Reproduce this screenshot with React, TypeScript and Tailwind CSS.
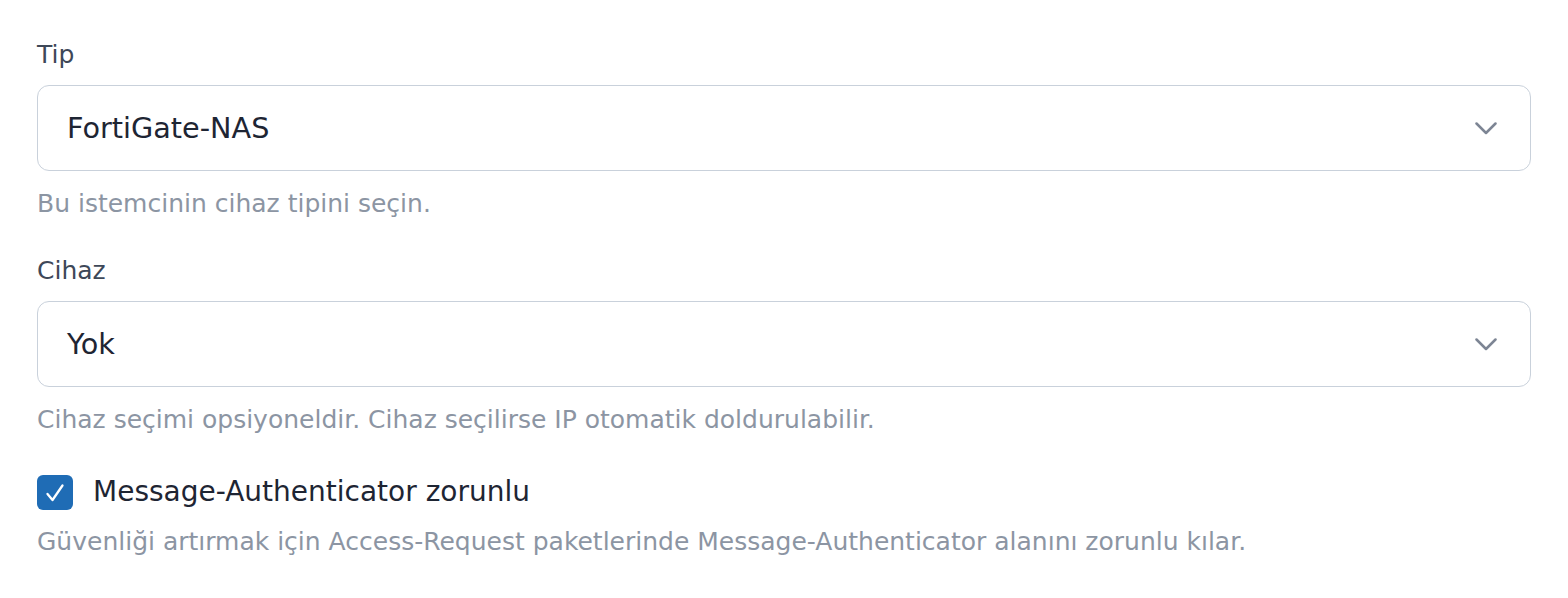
import React from "react";

function Chevron() {
  return (
    <svg width="22" height="13" viewBox="0 0 22 13" fill="none" className="shrink-0">
      <polyline points="1.5,1.5 11,11 20.5,1.5" stroke="#7d8594" strokeWidth="2.5" strokeLinecap="round" strokeLinejoin="round" />
    </svg>
  );
}

function Select({ value }: { value: string }) {
  return (
    <div className="mt-[13px] flex h-[86px] items-center justify-between rounded-[12px] border border-[#c9d1db] bg-white pl-[29px] pr-[33px]">
      <span className="text-[28.7px] leading-[40px] text-[#1e2533]">{value}</span>
      <Chevron />
    </div>
  );
}

export default function App() {
  return (
    <div className="min-h-[598px] bg-white px-[37px] pt-[37px] [font-family:'DejaVu_Sans',sans-serif]">
      <div className="text-[25px] leading-[35px] text-[#3e4858]">Tip</div>
      <Select value="FortiGate-NAS" />
      <div className="mt-[15px] text-[25px] leading-[35px] text-[#8c95a3]">Bu istemcinin cihaz tipini seçin.</div>

      <div className="mt-[32px] text-[25px] leading-[35px] text-[#3e4858]">Cihaz</div>
      <Select value="Yok" />
      <div className="mt-[15px] text-[25px] leading-[35px] text-[#8c95a3]">
        Cihaz seçimi opsiyoneldir. Cihaz seçilirse IP otomatik doldurulabilir.
      </div>

      <div className="mt-[35px] flex items-center gap-[20px]">
        <div className="flex h-[35px] w-[36px] shrink-0 rounded-[6px] bg-[#1f6cb5]">
          <svg width="36" height="35" viewBox="0 0 36 35" fill="none">
            <polyline points="10.5,19 15.5,25 25.5,10.5" stroke="#ffffff" strokeWidth="2.3" strokeLinecap="round" strokeLinejoin="round" />
          </svg>
        </div>
        <span className="text-[28px] leading-[40px] text-[#1e2533]">Message-Authenticator zorunlu</span>
      </div>
      <div className="mt-[12px] text-[25px] leading-[35px] text-[#8c95a3]">
        Güvenliği artırmak için Access-Request paketlerinde Message-Authenticator alanını zorunlu kılar.
      </div>
    </div>
  );
}
